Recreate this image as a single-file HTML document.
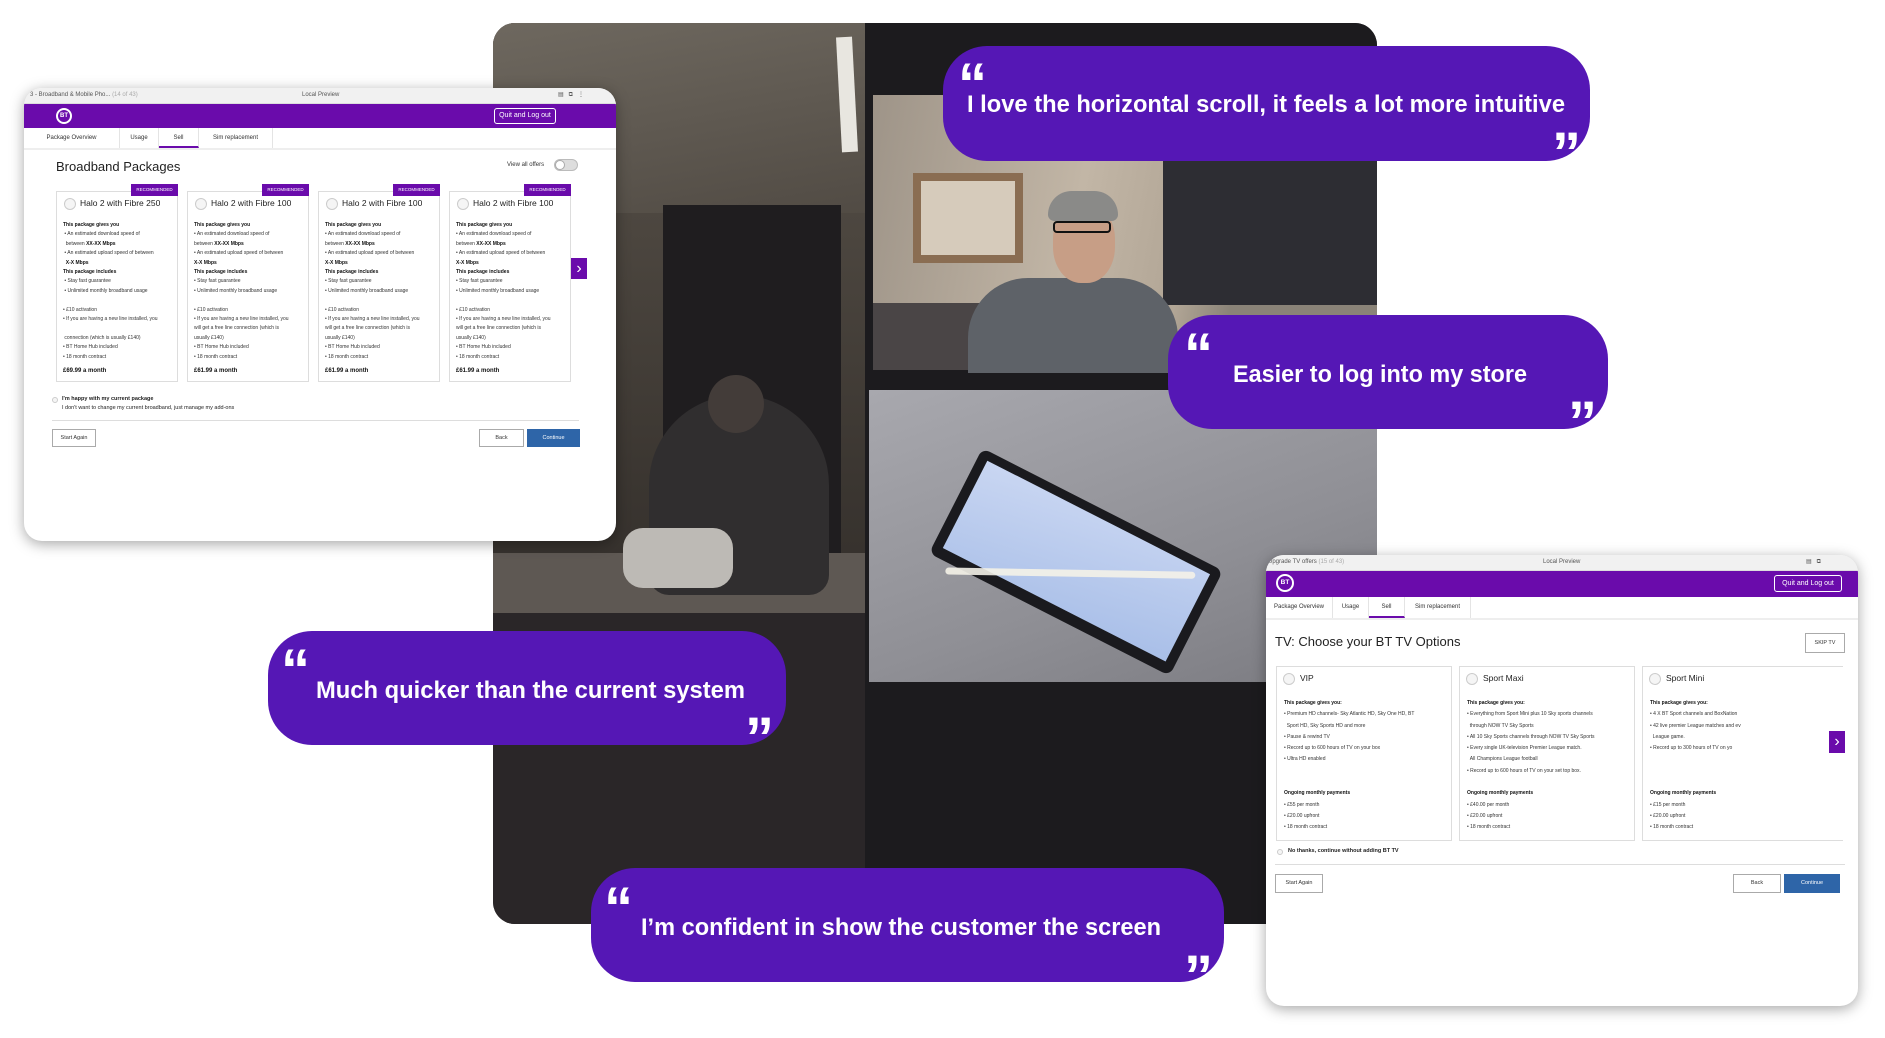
<!DOCTYPE html>
<html><head><meta charset="utf-8"><style>
*{margin:0;padding:0;box-sizing:border-box}
body{width:1885px;height:1038px;background:#fff;position:relative;overflow:hidden;font-family:"Liberation Sans",sans-serif}
.a{position:absolute}
.photo{left:493px;top:23px;width:884px;height:901px;border-radius:22px;overflow:hidden;background:#221f22}
.shot{background:#fff;border-radius:18px;overflow:hidden;box-shadow:0 3px 14px rgba(0,0,0,.35)}
.tb{left:0;top:0;right:0;height:16px;background:#f1f1f1;font-size:6px;color:#555;border-bottom:1px solid #ddd}
.pb{left:0;right:0;background:#6a0bab}
.bt{border:2px solid #fff;border-radius:50%;color:#fff;font-weight:bold;font-size:8px;text-align:center}
.ql{border:1px solid #fff;border-radius:3px;color:#fff;font-size:7px;text-align:center}
.tabs{left:0;right:0;border-bottom:2px solid #eee;font-size:6px;color:#333}
.tab{position:absolute;top:0;bottom:0;border-right:1px solid #e4e4e4;text-align:center}
.card{border:1px solid #ddd;background:#fff;font-size:5px;color:#333;line-height:9.4px}
.card b{color:#111}
.rec{background:#6a0bab;color:#fff;font-size:4.5px;text-align:center;line-height:11px}
.rad{border:1px solid #ccc;border-radius:50%;background:#f5f5f5}
.btn{border:1px solid #aaa;background:#fff;font-size:5.5px;text-align:center;color:#333}
.cont{background:#2e65a8;color:#fff;font-size:5.5px;text-align:center}
.arr{background:#6a0bab;color:#fff;font-size:16px;text-align:center}
.bub{background:#5517b5;border-radius:44px}
</style></head><body>

<!-- PHOTO -->
<div class="a photo">
  <div class="a" style="left:0;top:0;width:380px;height:760px;background:linear-gradient(180deg,#5f5a52 0%,#4d4740 25%,#3b3631 60%,#2a2624 100%)"></div>
  <div class="a" style="left:0;top:0;width:380px;height:190px;background:linear-gradient(170deg,#6e685f,#514b44)"></div>
  <div class="a" style="left:346px;top:14px;width:16px;height:115px;background:#e8e6e0;transform:rotate(-3deg)"></div>
  <div class="a" style="left:170px;top:182px;width:178px;height:400px;background:#1f1d1f"></div>
  <div class="a" style="left:0;top:530px;width:380px;height:60px;background:#5e5853"></div>
  <div class="a" style="left:156px;top:372px;width:180px;height:200px;background:#302e2f;border-radius:90px 90px 20px 20px"></div>
  <div class="a" style="left:215px;top:352px;width:56px;height:58px;background:#433c39;border-radius:50%"></div>
  <div class="a" style="left:130px;top:505px;width:110px;height:60px;background:#bdbab5;border-radius:20px"></div>
  <div class="a" style="left:0;top:590px;width:380px;height:320px;background:#2a2628"></div>
  <div class="a" style="left:372px;top:0;width:523px;height:906px;background:#1c1b1e"></div>
  <!-- upper monitor -->
  <div class="a" style="left:380px;top:72px;width:515px;height:275px;background:linear-gradient(100deg,#9e9488 0%,#c2b6a6 40%,#b2a696 60%,#8a8378 70%)"></div>
  <div class="a" style="left:670px;top:72px;width:225px;height:210px;background:#2d2d33"></div>
  <div class="a" style="left:380px;top:280px;width:180px;height:67px;background:#4a4546"></div>
  <div class="a" style="left:420px;top:150px;width:110px;height:90px;border:8px solid #8a6d52;background:#d6cbbb"></div>
  <div class="a" style="left:475px;top:255px;width:210px;height:95px;background:#5e6268;border-radius:60px 60px 0 0"></div>
  <div class="a" style="left:560px;top:180px;width:62px;height:80px;background:#c79e86;border-radius:45%"></div>
  <div class="a" style="left:555px;top:168px;width:70px;height:30px;background:#8a8a88;border-radius:30px 30px 8px 8px"></div>
  <div class="a" style="left:560px;top:198px;width:58px;height:12px;border:2px solid #111;border-radius:4px"></div>
  <!-- lower monitor -->
  <div class="a" style="left:376px;top:367px;width:519px;height:292px;background:linear-gradient(160deg,#a8a8ae,#8f8f95 60%,#7a7a80)"></div>
  <div class="a" style="left:448px;top:480px;width:270px;height:118px;background:#1a1a1e;border-radius:8px;transform:rotate(27deg)">
    <div class="a" style="left:10px;top:9px;right:10px;bottom:11px;background:linear-gradient(170deg,#c9d6f2,#a9bfe8)"></div>
    <div class="a" style="left:10px;top:68px;width:250px;height:7px;background:#f4f2e8;border-radius:4px;transform:rotate(-26deg);opacity:.9"></div>
  </div>
</div>

<!-- LEFT SCREENSHOT -->
<div class="a shot" style="left:24px;top:88px;width:592px;height:453px">
  <div class="a tb"><span class="a" style="left:6px;top:4px">3 - Broadband &amp; Mobile Pho... <span style="color:#aaa">(14 of 43)</span></span><span class="a" style="left:278px;top:4px">Local Preview</span><span class="a" style="left:534px;top:3px">▤ &nbsp; ⧉ &nbsp; ⋮</span></div>
  <div class="a pb" style="top:16px;height:24px">
    <div class="a bt" style="left:32px;top:4px;width:16px;height:16px;line-height:12px;font-size:6px">BT</div>
    <div class="a ql" style="left:470px;top:4px;width:62px;height:16px;line-height:14px">Quit and Log out</div>
  </div>
  <div class="a tabs" style="top:40px;height:22px">
    <div class="tab" style="left:0;width:96px;line-height:20px">Package Overview</div>
    <div class="tab" style="left:96px;width:39px;line-height:20px">Usage</div>
    <div class="tab" style="left:135px;width:40px;line-height:20px;border-bottom:2px solid #6a0bab">Sell</div>
    <div class="tab" style="left:175px;width:74px;line-height:20px">Sim replacement</div>
  </div>
  <div class="a" style="left:32px;top:71px;font-size:13px;color:#222">Broadband Packages</div>
  <div class="a" style="left:483px;top:74px;font-size:6px;color:#333">View all offers</div>
  <div class="a" style="left:530px;top:71px;width:24px;height:12px;border-radius:6px;background:#ddd;border:1px solid #bbb"><div class="a" style="left:0;top:0;width:10px;height:10px;border-radius:50%;background:#fff;border:1px solid #aaa"></div></div>

  <div class="a card" style="left:32px;top:103px;width:122px;height:191px;padding:29px 0 0 6px">
    <b>This package gives you</b><br>&nbsp;• An estimated download speed of<br>&nbsp;&nbsp;between <b>XX-XX Mbps</b><br>&nbsp;• An estimated upload speed of between<br>&nbsp;&nbsp;<b>X-X Mbps</b><br><b>This package includes</b><br>&nbsp;• Stay fast guarantee<br>&nbsp;• Unlimited monthly broadband usage<br><br>• £10 activation<br>• If you are having a new line installed, you<br><br>&nbsp;connection (which is usually £140)<br>• BT Home Hub included<br>• 18 month contract<br><b style="font-size:6px;line-height:18px">£69.99 a month</b>
  </div>
  <div class="a card" style="left:163px;top:103px;width:122px;height:191px;padding:29px 0 0 6px">
    <b>This package gives you</b><br>• An estimated download speed of<br>between <b>XX-XX Mbps</b><br>• An estimated upload speed of between<br><b>X-X Mbps</b><br><b>This package includes</b><br>• Stay fast guarantee<br>• Unlimited monthly broadband usage<br><br>• £10 activation<br>• If you are having a new line installed, you<br>will get a free line connection (which is<br>usually £140)<br>• BT Home Hub included<br>• 18 month contract<br><b style="font-size:6px;line-height:18px">£61.99 a month</b>
  </div>
  <div class="a card" style="left:294px;top:103px;width:122px;height:191px;padding:29px 0 0 6px">
    <b>This package gives you</b><br>• An estimated download speed of<br>between <b>XX-XX Mbps</b><br>• An estimated upload speed of between<br><b>X-X Mbps</b><br><b>This package includes</b><br>• Stay fast guarantee<br>• Unlimited monthly broadband usage<br><br>• £10 activation<br>• If you are having a new line installed, you<br>will get a free line connection (which is<br>usually £140)<br>• BT Home Hub included<br>• 18 month contract<br><b style="font-size:6px;line-height:18px">£61.99 a month</b>
  </div>
  <div class="a card" style="left:425px;top:103px;width:122px;height:191px;padding:29px 0 0 6px">
    <b>This package gives you</b><br>• An estimated download speed of<br>between <b>XX-XX Mbps</b><br>• An estimated upload speed of between<br><b>X-X Mbps</b><br><b>This package includes</b><br>• Stay fast guarantee<br>• Unlimited monthly broadband usage<br><br>• £10 activation<br>• If you are having a new line installed, you<br>will get a free line connection (which is<br>usually £140)<br>• BT Home Hub included<br>• 18 month contract<br><b style="font-size:6px;line-height:18px">£61.99 a month</b>
  </div>
  <div class="a rec" style="left:107px;top:96px;width:47px;height:12px">RECOMMENDED</div>
  <div class="a rec" style="left:238px;top:96px;width:47px;height:12px">RECOMMENDED</div>
  <div class="a rec" style="left:369px;top:96px;width:47px;height:12px">RECOMMENDED</div>
  <div class="a rec" style="left:500px;top:96px;width:47px;height:12px">RECOMMENDED</div>
  <div class="a rad" style="left:40px;top:110px;width:12px;height:12px"></div><div class="a" style="left:56px;top:110px;font-size:8.5px;color:#222">Halo 2 with Fibre 250</div>
  <div class="a rad" style="left:171px;top:110px;width:12px;height:12px"></div><div class="a" style="left:187px;top:110px;font-size:8.5px;color:#222">Halo 2 with Fibre 100</div>
  <div class="a rad" style="left:302px;top:110px;width:12px;height:12px"></div><div class="a" style="left:318px;top:110px;font-size:8.5px;color:#222">Halo 2 with Fibre 100</div>
  <div class="a rad" style="left:433px;top:110px;width:12px;height:12px"></div><div class="a" style="left:449px;top:110px;font-size:8.5px;color:#222">Halo 2 with Fibre 100</div>
  <div class="a arr" style="left:547px;top:170px;width:16px;height:21px;line-height:21px">›</div>
  <div class="a rad" style="left:28px;top:309px;width:6px;height:6px"></div>
  <div class="a" style="left:38px;top:307px;font-size:5.5px;color:#222;line-height:9px"><b>I'm happy with my current package</b><br>I don't want to change my current broadband, just manage my add-ons</div>
  <div class="a" style="left:28px;top:332px;width:527px;height:1px;background:#ddd"></div>
  <div class="a btn" style="left:28px;top:341px;width:44px;height:18px;line-height:16px">Start Again</div>
  <div class="a btn" style="left:455px;top:341px;width:45px;height:18px;line-height:16px">Back</div>
  <div class="a cont" style="left:503px;top:341px;width:53px;height:18px;line-height:18px">Continue</div>
</div>

<!-- RIGHT SCREENSHOT -->
<div class="a shot" style="left:1266px;top:555px;width:592px;height:451px">
  <div class="a tb"><span class="a" style="left:2px;top:4px">Upgrade TV offers <span style="color:#aaa">(15 of 43)</span></span><span class="a" style="left:277px;top:4px">Local Preview</span><span class="a" style="left:540px;top:3px">▤ &nbsp; ⧉</span></div>
  <div class="a pb" style="top:16px;height:26px">
    <div class="a bt" style="left:10px;top:3px;width:18px;height:18px;line-height:14px;font-size:6.5px">BT</div>
    <div class="a ql" style="left:508px;top:4px;width:68px;height:17px;line-height:15px">Quit and Log out</div>
  </div>
  <div class="a tabs" style="top:42px;height:23px">
    <div class="tab" style="left:0;width:67px;line-height:21px">Package Overview</div>
    <div class="tab" style="left:67px;width:36px;line-height:21px">Usage</div>
    <div class="tab" style="left:103px;width:36px;line-height:21px;border-bottom:2px solid #6a0bab">Sell</div>
    <div class="tab" style="left:139px;width:66px;line-height:21px">Sim replacement</div>
  </div>
  <div class="a" style="left:9px;top:79px;font-size:13px;color:#222">TV: Choose your BT TV Options</div>
  <div class="a btn" style="left:539px;top:78px;width:40px;height:20px;line-height:18px;font-size:5.5px">SKIP TV</div>

  <div class="a card" style="left:10px;top:111px;width:176px;height:175px;padding:31px 0 0 7px;line-height:11.3px">
    <b>This package gives you:</b><br>• Premium HD channels- Sky Atlantic HD, Sky One HD, BT<br>&nbsp;&nbsp;Sport HD, Sky Sports HD and more<br>• Pause &amp; rewind TV<br>• Record up to 600 hours of TV on your box<br>• Ultra HD enabled<br><br><br><b>Ongoing monthly payments</b><br>• £55 per month<br>• £20.00 upfront<br>• 18 month contract
  </div>
  <div class="a card" style="left:193px;top:111px;width:176px;height:175px;padding:31px 0 0 7px;line-height:11.3px">
    <b>This package gives you:</b><br>• Everything from Sport Mini plus 10 Sky sports channels<br>&nbsp;&nbsp;through NOW TV Sky Sports<br>• All 10 Sky Sports channels through NOW TV Sky Sports<br>• Every single UK-television Premier League match.<br>&nbsp;&nbsp;All Champions League football<br>• Record up to 600 hours of TV on your set top box.<br><br><b>Ongoing monthly payments</b><br>• £40.00 per month<br>• £20.00 upfront<br>• 18 month contract
  </div>
  <div class="a card" style="left:376px;top:111px;width:219px;height:175px;padding:31px 0 0 7px;line-height:11.3px;border-right:none;overflow:hidden;white-space:nowrap">
    <b>This package gives you:</b><br>• 4 X BT Sport channels and BoxNation<br>• 42 live premier League matches and ev<br>&nbsp;&nbsp;League game.<br>• Record up to 300 hours of TV on yo<br><br><br><br><b>Ongoing monthly payments</b><br>• £15 per month<br>• £20.00 upfront<br>• 18 month contract
  </div>
  <div class="a" style="left:577px;top:100px;width:20px;height:200px;background:#fff"></div>
  <div class="a rad" style="left:17px;top:118px;width:12px;height:12px"></div><div class="a" style="left:34px;top:118px;font-size:8.5px;color:#222">VIP</div>
  <div class="a rad" style="left:200px;top:118px;width:12px;height:12px"></div><div class="a" style="left:217px;top:118px;font-size:8.5px;color:#222">Sport Maxi</div>
  <div class="a rad" style="left:383px;top:118px;width:12px;height:12px"></div><div class="a" style="left:400px;top:118px;font-size:8.5px;color:#222">Sport Mini</div>
  <div class="a arr" style="left:563px;top:176px;width:16px;height:22px;line-height:22px">›</div>
  <div class="a rad" style="left:11px;top:294px;width:6px;height:6px"></div>
  <div class="a" style="left:22px;top:293px;font-size:5.5px;color:#222"><b>No thanks, continue without adding BT TV</b></div>
  <div class="a" style="left:9px;top:309px;width:570px;height:1px;background:#ddd"></div>
  <div class="a btn" style="left:9px;top:319px;width:48px;height:19px;line-height:17px">Start Again</div>
  <div class="a btn" style="left:467px;top:319px;width:48px;height:19px;line-height:17px">Back</div>
  <div class="a cont" style="left:518px;top:319px;width:56px;height:19px;line-height:19px">Continue</div>
</div>

<!-- BUBBLES -->
<div class="a bub" style="left:943px;top:46px;width:647px;height:115px"></div>
<div class="a bub" style="left:1168px;top:315px;width:440px;height:114px"></div>
<div class="a bub" style="left:268px;top:631px;width:518px;height:114px"></div>
<div class="a bub" style="left:591px;top:868px;width:633px;height:114px"></div>
<svg class="a" style="left:0;top:0" width="1885" height="1038">
 <g fill="#fff" font-family="Liberation Sans, sans-serif" font-weight="bold">
  <text x="967" y="112" font-size="24" textLength="598" lengthAdjust="spacingAndGlyphs">I love the horizontal scroll, it feels a lot more intuitive</text>
  <text x="1233" y="382" font-size="24" textLength="294" lengthAdjust="spacingAndGlyphs">Easier to log into my store</text>
  <text x="316" y="698" font-size="24" textLength="429" lengthAdjust="spacingAndGlyphs">Much quicker than the current system</text>
  <text x="641" y="935" font-size="24" textLength="520" lengthAdjust="spacingAndGlyphs">I’m confident in show the customer the screen</text>
  <g font-size="58">
   <text x="958" y="104">“</text><text x="1552" y="173">”</text>
   <text x="1184" y="374">“</text><text x="1568" y="442">”</text>
   <text x="281" y="690">“</text><text x="745" y="758">”</text>
   <text x="604" y="928">“</text><text x="1184" y="996">”</text>
  </g>
 </g>
</svg>
</body></html>
